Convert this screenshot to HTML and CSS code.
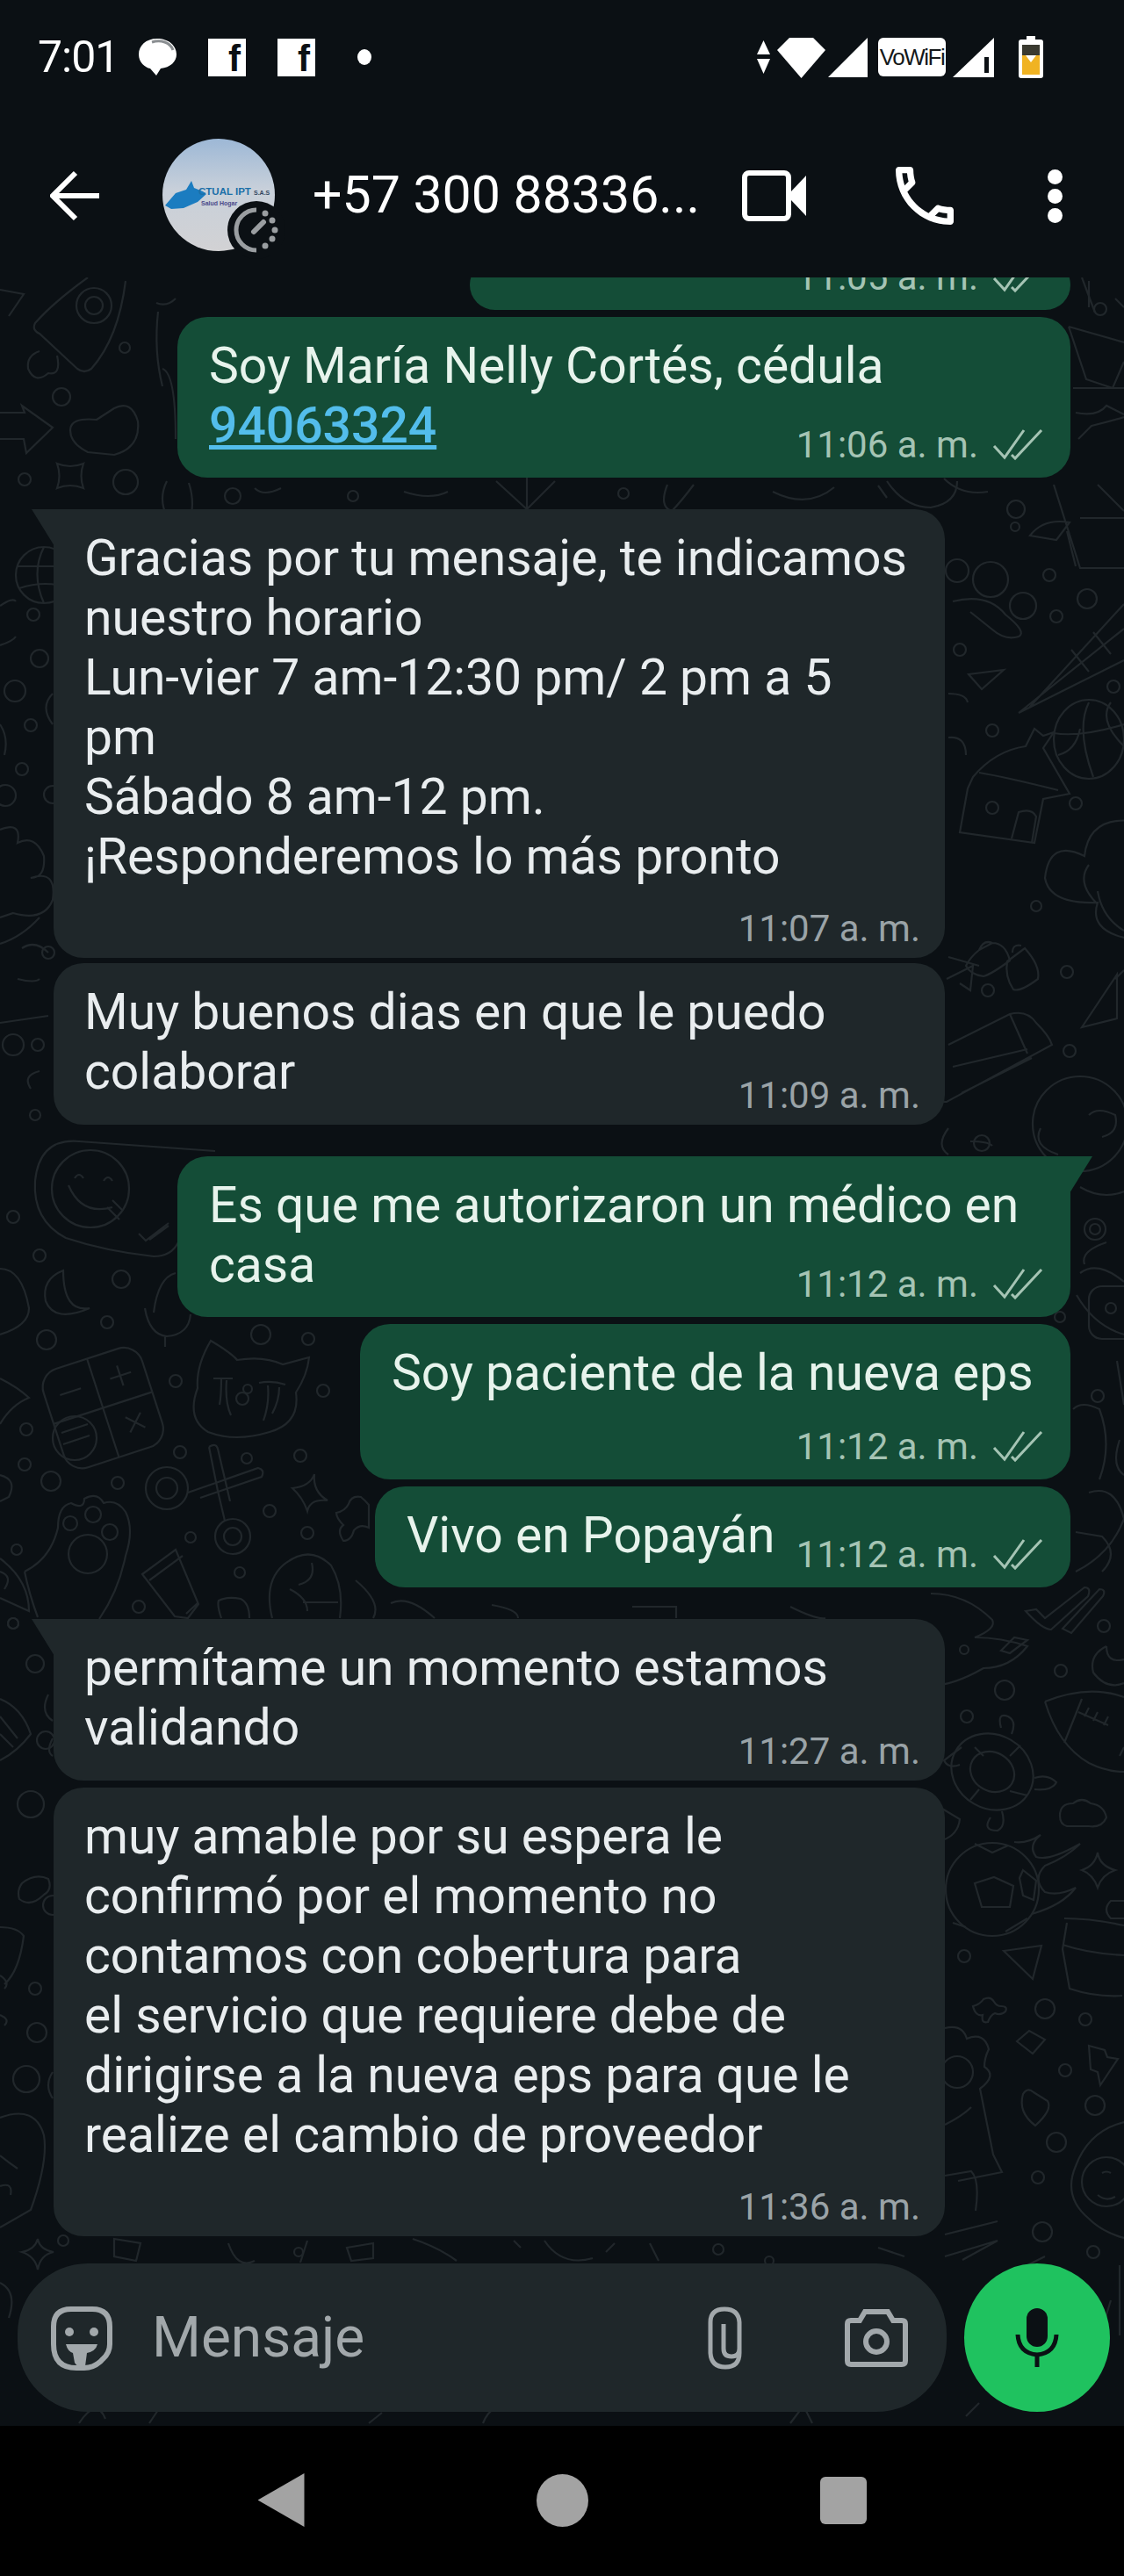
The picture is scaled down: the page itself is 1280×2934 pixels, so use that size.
FILE: index.html
```html
<!DOCTYPE html>
<html lang="es">

<head>
    <meta charset="UTF-8">
    <meta name="viewport" content="width=device-width, initial-scale=1.0">
    <title>WhatsApp</title>
    <link rel="stylesheet" href="styles.css">
</head>

<body>
    <div id="phone">

        <div class="topbar">
            <div class="status-row">
                <div class="status-left">
                    <span class="clock">7:01</span>
                    <svg class="st-chat" viewBox="0 0 45 44"><path d="M22 1C9 1 1 9 1 19c0 9 7 15 13 16l7 8 5-8c11-1 18-8 18-16C44 9 35 1 22 1z" fill="#fff"/><path d="M16 5c10-3 21 0 24 9" fill="none" stroke="#8b8f92" stroke-width="3"/></svg>
                    <span class="fb">f</span>
                    <span class="fb">f</span>
                    <span class="st-dot"></span>
                </div>
                <div class="status-right">
                    <svg class="st-arrows" viewBox="0 0 15 38"><path d="M7.5 0L15 16H0zM0 21h15L7.5 38z" fill="#fff"/></svg>
                    <svg class="st-wifi" viewBox="0 0 55 47"><path d="M14 1h27l14 14-27.500 32L0 15z" fill="#fff"/></svg>
                    <svg class="st-signal" viewBox="0 0 45 45"><path d="M45 0v45H0z" fill="#fff"/></svg>
                    <span class="vowifi">VoWiFi</span>
                    <svg class="st-signal2" viewBox="0 0 47 45"><path d="M47 0v45H0z" fill="#fff"/><path d="M36 22h5v18h-5z" fill="#0b1014"/></svg>
                    <svg class="st-battery" viewBox="0 0 28 48"><path d="M9 0h10v4h6q3 0 3 3v38q0 3-3 3H3q-3 0-3-3V7q0-3 3-3h6z" fill="#fff"/><path d="M4 10h20v12H4z" fill="#3a3a30"/><path d="M4 22h20v22H4z" fill="#f0b323"/><path d="M8 22h12l-6 8z" fill="#fff"/></svg>
                </div>
            </div>
            <div class="header-row">
                <svg class="ic-back" viewBox="0 0 58 58"><path d="M56 29H5M29 3L3 29l26 26" fill="none" stroke="#fff" stroke-width="6"/></svg>
                <svg class="avatar" viewBox="0 0 140 140">
                    <defs>
                        <linearGradient id="avatarBg" x1="0" y1="0" x2="0" y2="1">
                            <stop offset="0" stop-color="#9db8d6"/>
                            <stop offset="0.45" stop-color="#c8d0da"/>
                            <stop offset="1" stop-color="#d2d2d4"/>
                        </linearGradient>
                    </defs>
                    <circle cx="64" cy="66" r="64" fill="url(#avatarBg)"/>
                    <path d="M3 78l12-14 12-4 6-10 3 8 10 4 4 3-10 9-16 7-14 1z" fill="#1b7cc0"/>
                    <text class="logo-name" x="41" y="66">CTUAL IPT</text>
                    <text class="logo-sas" x="104" y="66">S.A.S</text>
                    <text class="logo-sub" x="44" y="78">Salud Hogar</text>
                    <circle cx="107" cy="106" r="33" fill="#0b1014"/>
                    <path d="M107 83a23 23 0 0 0 0 46" fill="none" stroke="#9a9ea1" stroke-width="5"/>
                    <path d="M104 108l11-11" stroke="#9a9ea1" stroke-width="6" stroke-linecap="round"/>
                    <g fill="#9a9ea1">
                        <circle cx="117" cy="87" r="3.500"/>
                        <circle cx="125" cy="95" r="3.500"/>
                        <circle cx="128" cy="106" r="3.500"/>
                        <circle cx="125" cy="116" r="3.500"/>
                        <circle cx="117" cy="124" r="3.500"/>
                    </g>
                </svg>
                <div class="contact-name">+57 300 88336...</div>
                <svg class="ic-video" viewBox="0 0 73 58"><rect x="3" y="3" width="50" height="52" rx="5" fill="none" stroke="#fff" stroke-width="6"/><path d="M56 24L73 6v46L56 34z" fill="#fff"/></svg>
                <svg class="ic-call" viewBox="3 3 18 18"><path d="M6.540 5c.06.890.210 1.760.450 2.590l-1.200 1.200c-.410-1.200-.670-2.470-.760-3.790h1.510m9.860 12.020c.850.240 1.720.390 2.600.450v1.490c-1.320-.090-2.590-.350-3.800-.750l1.200-1.190M7.500 3H4c-.550 0-1 .450-1 1 0 9.390 7.610 17 17 17 .550 0 1-.450 1-1v-3.490c0-.550-.450-1-1-1-1.240 0-2.450-.200-3.570-.570-.100-.040-.210-.050-.310-.050-.260 0-.510.100-.710.290l-2.200 2.200c-2.830-1.450-5.150-3.760-6.590-6.590l2.200-2.200c.280-.280.360-.670.250-1.020C8.700 6.450 8.500 5.250 8.500 4c0-.550-.450-1-1-1z" fill="#fff"/></svg>
                <div class="ic-dots"><span></span><span></span><span></span></div>
            </div>
        </div>

        <div class="chat">
            <svg class="doodles" viewBox="0 316 1280 2447" aria-hidden="true">
                <!-- izquierda arriba -->
                <path d="M100 316Q60 345 40 368q-4 8 5 12l43 40q8 6 16 0q31-35 39-100"/>
                <circle cx="107" cy="348" r="20"/><circle cx="107" cy="348" r="10"/>
                <path d="M45 400q-15 5-13 20q8 18 23 5q15 3 10-20"/>
                <path d="M0 330l27 5-17 25"/>
                <path d="M0 470h28l-3-8 35 25-30 29-3-16H0"/>
                <path d="M80 490q0-15 30-12l20-13q20-10 27 15q3 30-27 38l-30-3q-20-10-20-25z"/>
                <path d="M65 528q15 6 30 0q-5 14 0 28q-15-6-30 0q5-14 0-28z"/>
                <circle cx="143" cy="549" r="14"/><circle cx="28" cy="546" r="7"/><circle cx="70" cy="452" r="10"/><circle cx="142" cy="396" r="6"/>
                <path d="M178 345q12 5 22-5M180 355q-5 45 5 85M185 420q15 5 15 80"/>
                <circle cx="50" cy="655" r="32"/><path d="M20 645h60M22 670q30-10 58 0M50 623q-15 30 0 64"/>
                <circle cx="38" cy="700" r="7"/><circle cx="45" cy="750" r="10"/><circle cx="17" cy="787" r="12"/><circle cx="35" cy="826" r="7"/><circle cx="25" cy="876" r="7"/><circle cx="6" cy="906" r="12"/><circle cx="60" cy="905" r="10"/>
                <path d="M60 790q-15 15 0 35M0 825q10 15 5 35M0 690q15-10 18-5M0 735q15-5 18-10"/>
                <path d="M0 945q25-10 20 15q20-10 30 15q2 25-15 25q30-10 25 25q-10 25-45 15L0 1045M0 1075q25-8 45-30M55 1085q-15-15-30-5"/>
                <circle cx="55" cy="1085" r="7"/><circle cx="43" cy="1190" r="7"/><circle cx="15" cy="1190" r="12"/>
                <path d="M0 1165l55-8M20 1115q20 5 25 0M35 1240q-10-15 10-20"/><circle cx="40" cy="1270" r="6"/>
                <!-- banda -->
                <path d="M215 550q10 30-5 60M190 548q-10 20 0 40M290 556q10 10 30 0"/>
                <circle cx="265" cy="565" r="9"/>
                <path d="M565 548l35 32 32-32M600 544v36M760 552q-10 25 5 30q10-10 25-30M1010 548q20 30 50 30q30-5 30-30M1000 553l10 14M460 560q30 10 50 0M880 560q40 20 70-5"/>
                <circle cx="402" cy="565" r="6"/><circle cx="710" cy="562" r="6"/>
                <!-- sonrisa -->
                <path d="M245 1311L90 1300q-45-4-50 45q-3 45 35 65q45 15 100 21q20 0 28-16"/>
                <circle cx="103" cy="1354" r="44"/>
                <path d="M78 1350q15 35 50 25M85 1342q5-8 10 0M118 1345q5-8 10 0M122 1375l14 14M128 1367l12 12"/>
                <path d="M158 1405l8 8 26-20M170 1412l22-16"/>
                <path d="M72 1447q-25 10-20 35q10 25 50 8q-30 5-30-43z"/>
                <circle cx="15" cy="1386" r="7"/><circle cx="45" cy="1430" r="7"/><circle cx="138" cy="1457" r="10"/><circle cx="122" cy="1506" r="7"/><circle cx="53" cy="1526" r="11"/>
                <path d="M0 1445q25 0 33 45q0 20-33 30M175 1495q5-40 25-45M165 1490q5 30 25 32q25-2 27-25M188 1522v12"/>
                <path d="M0 1570q20 10 33 22q-20 8-33 30"/>
                <!-- calculadora -->
                <g transform="rotate(-18 116 1603)">
                    <rect x="58" y="1545" width="118" height="118" rx="22"/>
                    <path d="M58 1604h118M117 1545v118M75 1575h25M135 1575h25M147 1563v24M138 1622l18 18M156 1622l-18 18"/>
                </g>
                <circle cx="85" cy="1638" r="25"/><path d="M70 1632l30-10M72 1645l30-10"/>
                <circle cx="30" cy="1628" r="7"/><circle cx="28" cy="1668" r="7"/><circle cx="58" cy="1687" r="11"/><circle cx="200" cy="1573" r="7"/><circle cx="205" cy="1654" r="7"/><circle cx="134" cy="1689" r="7"/><circle cx="297" cy="1520" r="11"/><circle cx="351" cy="1525" r="7"/><circle cx="368" cy="1584" r="7"/><circle cx="342" cy="1658" r="7"/><circle cx="281" cy="1661" r="6"/><circle cx="307" cy="1721" r="7"/><circle cx="217" cy="1751" r="6"/><circle cx="350" cy="1746" r="7"/><circle cx="273" cy="1791" r="6"/><circle cx="158" cy="1830" r="7"/><circle cx="19" cy="1765" r="6"/><circle cx="15" cy="1849" r="6"/>
                <path d="M0 1680q20 5 10 25l-10 5M0 1680M0 1775q33 25 33 60l-33-15M0 1790q15 5 5 20"/>
                <!-- gato -->
                <path d="M240 1527q25 15 30 22q30-5 52 5l30-8q-2 20-15 40q5 35-30 45q-40 12-70 0q-25-15-12-50q-2-25 15-54z"/>
                <path d="M243 1570h22M252 1570q0 20-2 30M258 1572q-2 25 5 40M295 1575q15-3 30 2M305 1578q2 20-5 40M318 1580q0 15-8 30"/>
                <circle cx="276" cy="1593" r="7"/><circle cx="282" cy="1582" r="5"/>
                <!-- tijeras -->
                <circle cx="190" cy="1695" r="24"/><circle cx="190" cy="1695" r="12"/>
                <circle cx="265" cy="1750" r="20"/><circle cx="265" cy="1750" r="10"/>
                <path d="M214 1700l80-28q8 2 4 10l-70 24M238 1648l10 50 8 34M238 1648q8-5 10 2l14 60"/>
                <!-- pata -->
                <path d="M28 1790q30-15 38-50q0-25 15-28q15 8 15-5q15-8 22 5q15-5 25 10q10 20 0 50q-8 40-30 72M28 1790q5 25 15 52"/>
                <circle cx="80" cy="1735" r="8"/><circle cx="106" cy="1725" r="9"/><circle cx="125" cy="1745" r="9"/><circle cx="100" cy="1770" r="22"/>
                <!-- crema -->
                <path d="M162 1793l38-28 26 62-12 16-15-2zM170 1800l38-28M212 1838l14-13"/>
                <!-- estrella, cruz -->
                <path d="M333 1695q20-2 25-16q-2 20 15 30q-20-2-23 12q-5-15-17-26z"/>
                <path d="M383 1723q10-2 14-10q3-10 14-8q6 5 9 9v26q-10-5-17 3q-3 12-12 12q-8-12 0-18q-8-8-8-14z"/>
                <!-- cara abajo -->
                <path d="M310 1843q-10-40 12-60q30-25 55 0q15 25 10 60M330 1810q20 10 20 25M355 1780q5 20-15 25M345 1825h40"/>
                <path d="M252 1843q-5-15-3-20q10-5 25-2q10 5 10 22"/>
                <!-- centro derecha inferior -->
                <path d="M405 1800q30 25 20 43M445 1826q20-10 50 17M560 1828q30 5 30 15M720 1830h50v13M900 1830q30 15 40 13"/>
                <!-- derecha arriba -->
                <path d="M1217 372l63 18M1217 372l20 60 30 10 13-30M1240 350v-30M1270 340l10 10M1232 316l15 40"/>
                <path d="M1225 470q25 5 35-8l20 10M1228 500l15-15q20-5 37-10M1222 442h58"/>
                <circle cx="1253" cy="352" r="7"/>
                <path d="M1075 545q20 20 50 15M1173 610q15-20 45-15l-15 20zM1200 552l30 95h50M1230 590h50M1250 552l30 30M1215 605l10 40"/>
                <circle cx="1157" cy="580" r="10"/><circle cx="1156" cy="600" r="5"/><circle cx="1195" cy="655" r="7"/><circle cx="1238" cy="682" r="11"/><circle cx="1203" cy="702" r="7"/><circle cx="1268" cy="782" r="7"/>
                <circle cx="1090" cy="650" r="13"/><circle cx="1128" cy="660" r="20"/><circle cx="1165" cy="690" r="15"/>
                <path d="M1085 685q40-10 60 15q25 20 15 25q-15 5-30-8l-25-20"/>
                <path d="M1160 812l120-96M1172 806l108-118M1160 812l120-60M1220 740l20 25M1245 720l20 25"/>
                <path d="M1103 768l40-5-25 22z"/><circle cx="1093" cy="740" r="7"/><circle cx="1130" cy="832" r="7"/>
                <path d="M1080 790q20 0 22 10M1080 840q20-2 20 20"/>
                <!-- casa -->
                <path d="M1108 885q25-30 60-35l10-20 10 8 12-4-12 18 30 52-30 6-10 50-85-12 9-50zM1115 880q30 5 90 20M1152 955l8-30q15-5 20 5l-5 30"/>
                <circle cx="1130" cy="920" r="7"/><circle cx="1225" cy="915" r="7"/>
                <!-- balon -->
                <ellipse cx="1240" cy="842" rx="40" ry="45"/><path d="M1200 835q30 5 80-10M1240 800q-15 30 5 85M1205 860q20-5 25-30M1265 800q-15 20 15 50"/>
                <!-- nube/arbol -->
                <path d="M1290 935q-50-5-55 40q-40-20-45 25q5 30 60 28q-10 30 30 40M1250 1015q5 30 30 45M1240 985q-15 20 10 45"/>
                <path d="M1232 1170l40-60v50zM1270 1115l10-10"/>
                <path d="M1100 1100q5-10 15-18l15-8q15 0 20 20q-20 15-30 18q-15-2-20-12zM1115 1082q5-12 15-8"/>
                <path d="M1147 1095l20-15q18 20 15 35q-20 15-28 12q-10-15-7-32zM1153 1085q0-10 10-8"/>
                <circle cx="1180" cy="1032" r="6"/><circle cx="1215" cy="1107" r="7"/><circle cx="1125" cy="1128" r="7"/><circle cx="1218" cy="1197" r="7"/>
                <path d="M1080 1090l35 10M1078 1115l30-15-3 28-12-8"/>
                <path d="M1080 1190l70-35q20-5 30 10 15 15 18 25l-120 65q-10 0-15-2M1150 1155l20 45M1085 1215l85-20M1095 1245l80-40"/>
                <circle cx="1230" cy="1280" r="54"/><path d="M1185 1285q-10 20 20 30M1240 1270q10-10 30 0q5 20-15 25"/>
                <path d="M1080 1285q-15 20 0 30M1105 1300q20 0 25 5"/><circle cx="1118" cy="1302" r="9"/>
                <!-- derecha media -->
                <path d="M1230 1352q25 15 50 5M1230 1450q20-15 50 10M1226 1475q20 35 54 45M1235 1440q-5-15 25-25"/>
                <circle cx="1247" cy="1400" r="12"/><circle cx="1247" cy="1400" r="6"/>
                <rect x="1240" y="1465" width="55" height="60" rx="15"/><circle cx="1265" cy="1490" r="6"/>
                <circle cx="1207" cy="1500" r="6"/><circle cx="1250" cy="1590" r="7"/>
                <path d="M1222 1605q10-10 30 0q15 40 0 80M1240 1700q30-10 40 30q-15 40-55 60M1272 1550l8 50M1275 1640q-10 30 5 40"/>
                <path d="M1225 1745l30 5q20 20 0 40"/>
                <!-- conejo, checks -->
                <path d="M1060 1815q40 0 70 30q5 10-20 20q30 0 60 10q-20 25-50 25q-35 20-60 20M1140 1880l15-15 15 3-20 15z"/>
                <circle cx="1098" cy="1879" r="5"/>
                <path d="M1168 1835l12-2 10 10 45-35q8 0 4 10l-42 38q-10 0-29-21zM1210 1855l42-45q8 0 4 8l-36 42z"/>
                <path d="M1260 1875q-20 10-15 30q15 20 35 12M1260 1875q0 20 20 15"/>
                <circle cx="1257" cy="1852" r="7"/><circle cx="1208" cy="1903" r="7"/><circle cx="1144" cy="1925" r="11"/><circle cx="1101" cy="1955" r="7"/>
                <!-- balon americano -->
                <path d="M1190 1938q50-20 90-5M1190 1938q15 50 50 70q20 10 40 10M1212 1985l20-50M1228 1950l34 15M1240 1945l-5 10M1250 1950l-5 10M1262 1955l-5 10M1275 2000l5-10"/>
                <!-- tortuga -->
                <ellipse cx="1130" cy="2018" rx="42" ry="48" transform="rotate(-60 1130 2018)"/>
                <ellipse cx="1130" cy="2018" rx="22" ry="26" transform="rotate(-60 1130 2018)"/>
                <path d="M1095 1990l-20 15q5 10 18 5M1140 1968q-5-18 8-13q10 5 4 20M1178 2025q15-5 25 5q-5 10-25 8M1128 2070q-10 15 8 15q10-5 5-22M1110 1990l10 10M1150 2000l12-12M1150 2040l20 5M1105 2050l10-12"/>
                <path d="M1207 2068q0-14 15-14q10-8 20 0q15 2 18 16q-5 12-20 10h-25q-8-2-8-12z"/>
                <path d="M1073 2060l20 12q-2 18-20 24"/>
                <!-- balon futbol -->
                <circle cx="1130" cy="2152" r="53"/>
                <path d="M1110 2145l22-7 22 10-4 24h-32zM1110 2100l20 10 18-8M1165 2130l15 12-3 22-12-5-4-20zM1100 2195l-15-5M1145 2200l25-15"/>
                <path d="M1155 2098q15 2 30-8q-15 12-5 25q15 5 50-15q-15 15-40 25q-15 15 0 30q15 5 35-5q-15 20-50 30"/>
                <path d="M1250 2110q2 15 20 20q-15 5-20 20q-5-15-18-20q15-5 18-20z"/>
                <path d="M1143 2222l43-6-10 38z"/><path d="M1280 2165h-15q-10 10 0 20h15"/>
                <circle cx="1098" cy="2228" r="7"/><circle cx="1190" cy="2288" r="11"/><circle cx="1236" cy="2300" r="7"/><circle cx="1213" cy="2358" r="7"/><circle cx="1247" cy="2398" r="11"/><circle cx="1203" cy="2440" r="11"/><circle cx="1182" cy="2480" r="7"/><circle cx="1187" cy="2542" r="11"/><circle cx="1245" cy="2565" r="7"/>
                <path d="M1108 2285q8-2 12-8q8-4 12 3q3 5 8 5q8 0 5 6q-5 5-12 2q-5 2-8 10q-8 2-6-8q-8 2-11-10z"/>
                <!-- maceta -->
                <path d="M1212 2185q30 0 68 8M1210 2215q30 10 70 12M1215 2190l-5 30 8 45q30 10 60 8"/>
                <path d="M1158 2325l14-12 18 10-14 16z"/>
                <path d="M1165 2385q5-8 12-2l16 10q6 10-14 28q-20-15-14-36z"/>
                <path d="M1240 2330l18 5 3 8 12 2-20 30-3-15-8-3z"/>
                <!-- aguacate -->
                <path d="M1280 2417q-40 10-55 50q-15 35 15 60q15 15 40 22"/>
                <circle cx="1260" cy="2485" r="28"/><path d="M1250 2500q10 8 20 2M1255 2475q5-3 10 0"/>
                <!-- flor abajo -->
                <path d="M1076 2310q20-5 25 12q20-8 25 12q-5 10-5 20q15 10-5 25l15 75 10 20-50 10M1076 2420q20-10 30-20M1076 2478l30-5q10 10 5 45M1076 2545l60-15M1076 2570l60-18-40 22"/>
                <circle cx="1090" cy="2360" r="18"/>
                <!-- banda inferior -->
                <path d="M1190 2570l-50 25M1275 2580v80M1265 2620q-15 50-30 80"/>
                <path d="M0 2600q20 10 10 40M1100 2752l15-15M90 2760q20-30 30-5M170 2760l10-15M420 2760l15-12M550 2760q10-25 30-15M900 2760l15-20 10 20"/>
                <circle cx="72" cy="2552" r="6"/><circle cx="340" cy="2565" r="5"/><circle cx="818" cy="2562" r="6"/><circle cx="876" cy="2575" r="5"/>
                <path d="M43 2550q2 12 18 15q-15 3-18 20q-3-15-18-20q15-3 18-15zM130 2550l30 5-5 20-25-5zM260 2555q10 30 30 20M350 2552l-8 25M470 2550q30 10 50 25M620 2552q20 30 55 20M740 2555l10 20M1000 2560l30 10"/>
                <!-- izquierda abajo -->
                <path d="M0 1935q25 10 35 40q-15 20-35 30M0 1955l20 25M0 1975l15 15M55 1930q-10 20 5 30M60 1980q-8 15 0 20"/>
                <circle cx="40" cy="1895" r="10"/><circle cx="15" cy="1849" r="6"/><circle cx="52" cy="1982" r="10"/><circle cx="35" cy="2055" r="15"/><circle cx="60" cy="2170" r="11"/><circle cx="40" cy="2265" r="7"/><circle cx="42" cy="2315" r="11"/><circle cx="30" cy="2368" r="15"/>
                <path d="M25 2145q15-12 30-5q5 12-5 18q-15 15-28 5q-3-10 3-18zM0 2195q20 0 27 10q-5 40-22 55M0 2250q12 8 5 15M0 2295q12 5 5 12M60 2360q-10 15 0 30"/>
                <path d="M0 2412q40-15 50 20q5 30-15 85l-35 20M0 2455q10 8 20 15M0 2490q15-5 12 10"/>
                <path d="M380 2545v-2M395 2560l30-5v17l-25 3zM585 2552l8 8M700 2555l-10 10"/>
            </svg>

            <div class="msg-list">
                <div class="bubble out clipped">
                    <div class="meta"><span class="time">11:05 a. m.</span><svg class="ticks" viewBox="0 0 58 38"><path d="M2 20l12 13L36 2M22 30l4 4L56 2"/></svg></div>
                </div>
                <div class="bubble out width-full">
                    <p>Soy María Nelly Cortés, cédula<br><a class="num-link" href="#">94063324</a></p>
                    <div class="meta meta-inline"><span class="time">11:06 a. m.</span><svg class="ticks" viewBox="0 0 58 38"><path d="M2 20l12 13L36 2M22 30l4 4L56 2"/></svg></div>
                </div>

                <div class="bubble in tail group-start">
                    <p>Gracias por tu mensaje, te indicamos<br>nuestro horario<br>Lun-vier 7 am-12:30 pm/ 2 pm a 5<br>pm<br>Sábado 8 am-12 pm.<br>¡Responderemos lo más pronto</p>
                    <div class="meta meta-below"><span class="time">11:07 a. m.</span></div>
                </div>
                <div class="bubble in tight">
                    <p>Muy buenos dias en que le puedo<br>colaborar</p>
                    <div class="meta meta-inline"><span class="time">11:09 a. m.</span></div>
                </div>

                <div class="bubble out width-full tail group-start">
                    <p>Es que me autorizaron un médico en<br>casa</p>
                    <div class="meta meta-inline"><span class="time">11:12 a. m.</span><svg class="ticks" viewBox="0 0 58 38"><path d="M2 20l12 13L36 2M22 30l4 4L56 2"/></svg></div>
                </div>
                <div class="bubble out width-mid">
                    <p>Soy paciente de la nueva eps</p>
                    <div class="meta meta-below"><span class="time">11:12 a. m.</span><svg class="ticks" viewBox="0 0 58 38"><path d="M2 20l12 13L36 2M22 30l4 4L56 2"/></svg></div>
                </div>
                <div class="bubble out width-short">
                    <p>Vivo en Popayán</p>
                    <div class="meta meta-inline"><span class="time">11:12 a. m.</span><svg class="ticks" viewBox="0 0 58 38"><path d="M2 20l12 13L36 2M22 30l4 4L56 2"/></svg></div>
                </div>

                <div class="bubble in tail group-start">
                    <p>permítame un momento estamos<br>validando</p>
                    <div class="meta meta-inline"><span class="time">11:27 a. m.</span></div>
                </div>
                <div class="bubble in">
                    <p>muy amable por su espera le<br>confirmó por el momento no<br>contamos con cobertura para<br>el servicio que requiere debe de<br>dirigirse a la nueva eps para que le<br>realize el cambio de proveedor</p>
                    <div class="meta meta-below"><span class="time">11:36 a. m.</span></div>
                </div>
            </div>

            <div class="composer">
                <div class="input-pill">
                    <svg class="ic-sticker" viewBox="0 0 72 74">
                        <path d="M24 4h24q20 0 20 20v20q0 10-8 17l-3 3q-8 7-18 7H30Q4 71 4 44V24Q4 4 24 4z" fill="none" stroke="#a2a8ab" stroke-width="6"/>
                        <circle cx="22" cy="30" r="5" fill="#a2a8ab"/><circle cx="50" cy="30" r="5" fill="#a2a8ab"/>
                        <path d="M18 44h36q-2 8-12 10l-2 15q-8 3-12-4l-2-11q-6-2-8-10z" fill="#a2a8ab"/>
                    </svg>
                    <span class="placeholder">Mensaje</span>
                    <svg class="ic-clip" viewBox="0 0 45 72"><path d="M38 20v33q0 16-16 16T5 53V18Q5 3 21 3t17 15v30q0 9-9 9t-9-9V20" fill="none" stroke="#a2a8ab" stroke-width="5"/></svg>
                    <svg class="ic-camera" viewBox="0 0 72 66"><path d="M23 3h26l6 10h10q4 0 4 4v42q0 4-4 4H7q-4 0-4-4V17q0-4 4-4h10z" fill="none" stroke="#a2a8ab" stroke-width="6"/><circle cx="36" cy="37" r="12" fill="none" stroke="#a2a8ab" stroke-width="6"/></svg>
                </div>
                <div class="mic-btn">
                    <svg class="ic-mic" viewBox="0 0 50 68"><rect x="13" y="0" width="24" height="44" rx="12" fill="#0b1014"/><path d="M3 30q1 21 22 23q21-2 22-23" fill="none" stroke="#0b1014" stroke-width="5"/><path d="M25 52v15" stroke="#0b1014" stroke-width="5"/></svg>
                </div>
            </div>
        </div>

        <div class="navbar">
            <span class="nav-back"></span>
            <span class="nav-home"></span>
            <span class="nav-recent"></span>
        </div>
    </div>
</body>

</html>
```

FILE: styles.css
```css
* {
    box-sizing: border-box;
}

body {
    margin: 0;
    background-color: #000;
    font-family: Roboto, "Liberation Sans", sans-serif;
}

#phone {
    width: 1280px;
    height: 2934px;
    display: flex;
    flex-direction: column;
    overflow: hidden;
}

/* barra superior */
.topbar {
    height: 316px;
    background-color: #0b1014;
    flex-shrink: 0;
}

.status-row {
    height: 130px;
    padding: 0 92px 0 43px;
    display: flex;
    justify-content: space-between;
    align-items: center;
}

.status-left,
.status-right {
    display: flex;
    align-items: center;
}

.clock {
    width: 90px;
    color: #fff;
    font-size: 50px;
    line-height: 44px;
    letter-spacing: -1px;
    white-space: nowrap;
}

.st-chat {
    width: 45px;
    height: 44px;
    margin-left: 24px;
}

.fb {
    width: 43px;
    height: 43px;
    margin-left: 36px;
    padding-right: 6px;
    display: flex;
    justify-content: flex-end;
    align-items: flex-end;
    background-color: #fff;
    color: #0b1014;
    font-family: "Liberation Sans", sans-serif;
    font-size: 42px;
    line-height: 41px;
    font-weight: 700;
}

.st-chat + .fb {
    margin-left: 35px;
}

.st-dot {
    width: 16px;
    height: 18px;
    margin-left: 48px;
    border-radius: 50%;
    background-color: #fff;
}

.st-arrows {
    width: 15px;
    height: 38px;
}

.st-wifi {
    width: 55px;
    height: 47px;
    margin-left: 8px;
}

.st-signal {
    width: 45px;
    height: 45px;
    margin-left: 3px;
}

.vowifi {
    width: 77px;
    height: 44px;
    margin-left: 12px;
    background-color: #fff;
    border-radius: 6px;
    color: #14181a;
    font-family: "Liberation Sans", sans-serif;
    font-size: 26px;
    line-height: 44px;
    letter-spacing: -1.500px;
    text-align: center;
}

.st-signal2 {
    width: 47px;
    height: 45px;
    margin-left: 8px;
}

.st-battery {
    width: 28px;
    height: 48px;
    margin-left: 28px;
}

.header-row {
    height: 186px;
    padding-left: 57px;
    display: flex;
    align-items: center;
}

.ic-back {
    width: 58px;
    height: 58px;
    margin-right: 70px;
    flex-shrink: 0;
}

.avatar {
    width: 140px;
    height: 140px;
    margin-top: 6px;
    margin-right: 31px;
    flex-shrink: 0;
}

.logo-name {
    font-family: "Liberation Sans", sans-serif;
    font-size: 11.500px;
    font-weight: 700;
    fill: #1b6fa8;
}

.logo-sas {
    font-family: "Liberation Sans", sans-serif;
    font-size: 7px;
    font-weight: 700;
    fill: #33475f;
}

.logo-sub {
    font-family: "Liberation Sans", sans-serif;
    font-size: 7px;
    font-weight: 700;
    fill: #4a4a8a;
}

.contact-name {
    width: 489px;
    margin-bottom: 4px;
    flex-shrink: 0;
    color: #fff;
    font-size: 59px;
    white-space: nowrap;
}

.ic-video {
    width: 73px;
    height: 58px;
    margin-right: 102px;
    flex-shrink: 0;
}

.ic-call {
    width: 66px;
    height: 66px;
    margin-right: 107px;
    flex-shrink: 0;
}

.ic-dots {
    width: 17px;
    display: flex;
    flex-direction: column;
    gap: 5px;
}

.ic-dots span {
    height: 17px;
    border-radius: 50%;
    background-color: #fff;
}

/* conversacion */
.chat {
    position: relative;
    height: 2447px;
    flex-shrink: 0;
    display: flex;
    flex-direction: column;
    background-color: #0b1014;
    overflow: hidden;
}

.doodles {
    position: absolute;
    left: 0;
    top: 0;
    width: 1280px;
    height: 2447px;
    fill: none;
    stroke: #21272b;
    stroke-width: 2.200px;
}

.msg-list {
    position: relative;
    flex: 1;
    display: flex;
    flex-direction: column;
    gap: 8px;
    padding: 0 61px 0 61px;
}

.bubble {
    position: relative;
    border-radius: 34px;
    font-size: 57px;
    line-height: 68px;
    white-space: nowrap;
}

.bubble p {
    margin: 0;
}

.bubble.in {
    width: 1015px;
    padding: 22px 28px 0 35px;
    background-color: #1f272a;
    color: #e9edef;
}

.bubble.out {
    align-self: flex-end;
    padding: 22px 31px 0 36px;
    background-color: #144d37;
    color: #e7f3ec;
}

.group-start {
    margin-top: 28px;
}

.tight {
    margin-top: -2px;
}

.clipped {
    width: 684px;
    margin-top: -20px;
    padding-top: 0 !important;
}

.width-full {
    width: 1017px;
}

.width-mid {
    width: 809px;
}

.width-short {
    width: 792px;
}

.tail::before {
    content: "";
    position: absolute;
    top: 0;
    width: 26px;
    height: 42px;
    background-color: inherit;
}

.bubble.in.tail {
    border-top-left-radius: 0;
}

.bubble.in.tail::before {
    left: -25px;
    clip-path: polygon(0 0, 100% 0, 100% 100%);
}

.bubble.out.tail {
    border-top-right-radius: 0;
}

.bubble.out.tail::before {
    right: -25px;
    clip-path: polygon(0 0, 100% 0, 0 100%);
}

.num-link {
    color: #53bdeb;
    text-decoration: underline;
    font-weight: 500;
}

.meta {
    height: 40px;
    box-sizing: content-box;
    display: flex;
    justify-content: flex-end;
    align-items: center;
    gap: 16px;
    padding-bottom: 17px;
    font-size: 42px;
    line-height: 40px;
}

.bubble.in .meta {
    padding-bottom: 13px;
    color: #9aa3a7;
}

.bubble.out .meta {
    color: #a5c4b4;
}

.meta-inline {
    margin-top: -32px;
}

.bubble.in .meta-inline {
    margin-top: -27px;
}

.meta-below {
    margin-top: 28px;
}

.bubble.out .meta-below {
    margin-top: 30px;
}

.ticks {
    width: 58px;
    height: 38px;
    fill: none;
    stroke: #a5c4b4;
    stroke-width: 3px;
}

/* caja de mensaje */
.composer {
    position: relative;
    height: 185px;
    flex-shrink: 0;
    padding: 0 16px 16px 20px;
    display: flex;
    justify-content: space-between;
}

.input-pill {
    width: 1058px;
    height: 169px;
    border-radius: 80px;
    background-color: #1f272a;
    padding-left: 37px;
    display: flex;
    align-items: center;
}

.ic-sticker {
    width: 72px;
    height: 74px;
    margin-right: 44px;
    flex-shrink: 0;
}

.placeholder {
    width: 631px;
    flex-shrink: 0;
    color: #a2a8ab;
    font-size: 64px;
}

.ic-clip {
    width: 45px;
    height: 72px;
    margin-right: 113px;
    flex-shrink: 0;
}

.ic-camera {
    width: 72px;
    height: 66px;
    flex-shrink: 0;
}

.mic-btn {
    width: 166px;
    height: 169px;
    border-radius: 50%;
    background-color: #1fc25f;
    display: flex;
    justify-content: center;
    align-items: center;
}

.ic-mic {
    width: 50px;
    height: 68px;
}

/* navegacion */
.navbar {
    flex: 1;
    background-color: #000;
    display: flex;
    justify-content: center;
    align-items: center;
    gap: 264px;
    padding-bottom: 2px;
}

.nav-back {
    width: 53px;
    height: 61px;
    background-color: #a3a3a3;
    clip-path: polygon(100% 0, 100% 100%, 0 50%);
}

.nav-home {
    width: 59px;
    height: 60px;
    border-radius: 50%;
    background-color: #a3a3a3;
}

.nav-recent {
    width: 53px;
    height: 54px;
    border-radius: 6px;
    background-color: #a3a3a3;
}
```
